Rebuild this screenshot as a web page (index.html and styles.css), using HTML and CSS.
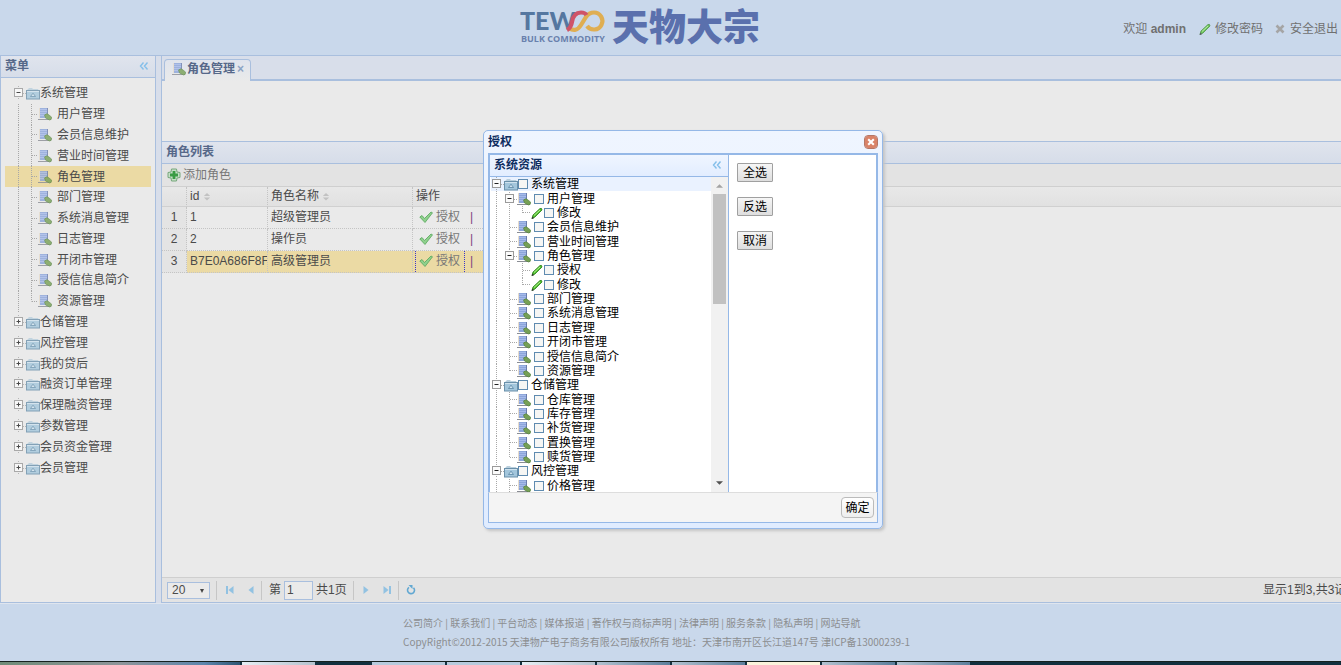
FILE: index.html
```html
<!DOCTYPE html>
<html lang="zh-CN">
<head>
<meta charset="utf-8">
<title>角色管理</title>
<link rel="stylesheet" href="styles.css">
</head>
<body>
<svg class="defs" aria-hidden="true">
  <symbol id="minus" viewBox="0 0 13 14"><path d="M5.500 0v2M5.500 12v2M10 7.500h3" stroke="#aaa" stroke-dasharray="1 1"/><rect x="1.500" y="2.500" width="8" height="8" fill="#fbfbfb" stroke="#9a9a9a"/><path d="M3.500 6.500h4" stroke="#222"/></symbol>
  <symbol id="plus" viewBox="0 0 13 14"><path d="M5.500 0v2M5.500 12v2M10 7.500h3" stroke="#aaa" stroke-dasharray="1 1"/><rect x="1.500" y="2.500" width="8" height="8" fill="#fbfbfb" stroke="#9a9a9a"/><path d="M3.500 6.500h4M5.500 4.500v4" stroke="#222"/></symbol>
  <symbol id="folder" viewBox="0 0 14 14"><path d="M1 4l2-2h3l1 1h5l1 2z" fill="#b9cfdd"/><rect x=".5" y="4.500" width="13" height="8.500" fill="#a3c6dc" stroke="#6a90aa"/><path d="M1 5.500h12" stroke="#cfe2ee"/><path d="M4.500 10.500L7 7.200l2.500 3.300z" fill="#cfe3f0" stroke="#5a87a5" stroke-width=".8"/></symbol>
  <symbol id="page" viewBox="0 0 14 14"><path d="M1.500 1h8.500v10h-8.500z" fill="#8ca5da"/><path d="M2 2.500h7.500M2 4.500h7.500M2 6.500h7.500M2 8.500h7.500" stroke="#a6baea"/><path d="M1.500 1v10" stroke="#e6dccb"/><path d="M9.500 1v6" stroke="#6a7cab"/><path d="M0 12.500h13" stroke="#8a8d94"/><path d="M6.500 8q2.500-2.500 4.500 0l2.500 2q.5 3-2 3l-4-2z" fill="#76a056" stroke="#4c7a38" stroke-width=".6"/></symbol>
  <symbol id="pencil" viewBox="0 0 14 14"><path d="M2 12.500l1-3.500 7-6.500q2-.8 2 1.500l-7 7z" fill="#50c02e" stroke="#287d17" stroke-width=".8"/><path d="M4 9.500l6-5.500" stroke="#b6ee93"/><path d="M1.500 13l1-2.500 1.500 1.700z" fill="#333"/></symbol>
  <symbol id="add" viewBox="0 0 14 14"><path d="M4.500 1h5L10 4l3 .5v5L10 10l-.5 3h-5L4 10l-3-.5v-5L4 4z" fill="#c6dfc8" stroke="#76a77b"/><path d="M7 3v8M3 7h8" stroke="#3a9c45" stroke-width="2.800"/></symbol>
  <symbol id="check" viewBox="0 0 14 14"><path d="M.8 7l2.200-1.500 2.500 3L12 2l1.500.8L6 12.500z" fill="#8fd08d" stroke="#55a65a" stroke-width=".8"/></symbol>
  <symbol id="fold" viewBox="0 0 10 10"><path d="M4.500 1.500L1.500 5l3 3.500M8.500 1.500L5.500 5l3 3.500" fill="none" stroke="#84bfea" stroke-width="1.400"/></symbol>
  <symbol id="sort" viewBox="0 0 8 10"><path d="M4 1l3.500 3.500h-7zM4 9.500L.5 6h7z" fill="#c2c2c2"/></symbol>
  <symbol id="cross" viewBox="0 0 10 10"><path d="M1.500 1.500l7 7M8.500 1.500l-7 7" stroke="currentColor" stroke-width="2.600"/></symbol>
  <symbol id="prev" viewBox="0 0 10 10"><path d="M7.500 1v8L2.500 5z" fill="#92c2e2"/></symbol>
  <symbol id="next" viewBox="0 0 10 10"><path d="M2.500 1v8l5-4z" fill="#92c2e2"/></symbol>
  <symbol id="first" viewBox="0 0 10 10"><path d="M1 1h2v8H1zM8.500 1v8L3.500 5z" fill="#92c2e2"/></symbol>
  <symbol id="last" viewBox="0 0 10 10"><path d="M7 1h2v8H7zM1.500 1v8l5-4z" fill="#92c2e2"/></symbol>
  <symbol id="reload" viewBox="0 0 10 10"><path d="M7.500 2.700A3.500 3.500 0 1 1 3 2.300" fill="none" stroke="#62a8d2" stroke-width="1.600"/><path d="M2.500 0h4v4z" fill="#62a8d2"/></symbol>
</svg>

<header class="top">
  <svg class="logo" viewBox="0 0 244 40" role="img" aria-label="TEWOO 天物大宗">
    <text class="logo-en" x="1" y="22">TEW</text>
    <path d="M50 20q7 5 12-3l5-8q3-4.500 8-4.500a8.500 8.500 0 1 1-7 13.500" fill="none" stroke="#dfae52" stroke-width="4.200"/>
    <path d="M48 22q4-2 5-8 1.500-9.500 9-9.500 4 0 5.500 2.500" fill="none" stroke="#cf5468" stroke-width="4.200"/>
    <text class="logo-sub" x="2" y="34">BULK COMMODITY</text>
    <text class="logo-cn" x="93" y="33">天物大宗</text>
  </svg>
  <nav class="user">
    <span>欢迎 <b>admin</b></span>
    <a href="#"><svg class="i14"><use href="#pencil"/></svg>修改密码</a>
    <a href="#"><svg class="i10"><use href="#cross"/></svg>安全退出</a>
  </nav>
</header>

<div class="work">
  <aside class="side">
    <h2 class="bar">菜单<button class="fold" aria-label="折叠"><svg class="i10"><use href="#fold"/></svg></button></h2>
    <ul class="tree menu">
      <li><svg class="tg"><use href="#minus"/></svg><svg class="i14"><use href="#folder"/></svg>系统管理</li>
      <li class="leaf"><i class="v"></i><i class="t"></i><svg class="i14"><use href="#page"/></svg><a href="#">用户管理</a></li>
      <li class="leaf"><i class="v"></i><i class="t"></i><svg class="i14"><use href="#page"/></svg><a href="#">会员信息维护</a></li>
      <li class="leaf"><i class="v"></i><i class="t"></i><svg class="i14"><use href="#page"/></svg><a href="#">营业时间管理</a></li>
      <li class="leaf on"><i class="v"></i><i class="t"></i><svg class="i14"><use href="#page"/></svg><a href="#">角色管理</a></li>
      <li class="leaf"><i class="v"></i><i class="t"></i><svg class="i14"><use href="#page"/></svg><a href="#">部门管理</a></li>
      <li class="leaf"><i class="v"></i><i class="t"></i><svg class="i14"><use href="#page"/></svg><a href="#">系统消息管理</a></li>
      <li class="leaf"><i class="v"></i><i class="t"></i><svg class="i14"><use href="#page"/></svg><a href="#">日志管理</a></li>
      <li class="leaf"><i class="v"></i><i class="t"></i><svg class="i14"><use href="#page"/></svg><a href="#">开闭市管理</a></li>
      <li class="leaf"><i class="v"></i><i class="t"></i><svg class="i14"><use href="#page"/></svg><a href="#">授信信息简介</a></li>
      <li class="leaf"><i class="v"></i><i class="t end"></i><svg class="i14"><use href="#page"/></svg><a href="#">资源管理</a></li>
      <li><svg class="tg"><use href="#plus"/></svg><svg class="i14"><use href="#folder"/></svg>仓储管理</li>
      <li><svg class="tg"><use href="#plus"/></svg><svg class="i14"><use href="#folder"/></svg>风控管理</li>
      <li><svg class="tg"><use href="#plus"/></svg><svg class="i14"><use href="#folder"/></svg>我的贷后</li>
      <li><svg class="tg"><use href="#plus"/></svg><svg class="i14"><use href="#folder"/></svg>融资订单管理</li>
      <li><svg class="tg"><use href="#plus"/></svg><svg class="i14"><use href="#folder"/></svg>保理融资管理</li>
      <li><svg class="tg"><use href="#plus"/></svg><svg class="i14"><use href="#folder"/></svg>参数管理</li>
      <li><svg class="tg"><use href="#plus"/></svg><svg class="i14"><use href="#folder"/></svg>会员资金管理</li>
      <li><svg class="tg"><use href="#plus"/></svg><svg class="i14"><use href="#folder"/></svg>会员管理</li>
    </ul>
  </aside>

  <main class="main">
    <div class="tabs"><div class="tab"><svg class="i14"><use href="#page"/></svg>角色管理<button class="tab-x" aria-label="关闭">×</button></div></div>
    <div class="search"></div>
    <h2 class="bar">角色列表</h2>
    <div class="tools"><a href="#"><svg class="i14"><use href="#add"/></svg>添加角色</a></div>
    <div class="grid">
      <table>
        <colgroup><col class="c-no"><col class="c-id"><col class="c-name"><col class="c-op"><col></colgroup>
        <thead><tr><th></th><th>id <svg class="sort"><use href="#sort"/></svg></th><th>角色名称 <svg class="sort"><use href="#sort"/></svg></th><th>操作</th><th></th></tr></thead>
        <tbody>
          <tr><td>1</td><td>1</td><td>超级管理员</td><td><a class="act" href="#"><svg class="i14"><use href="#check"/></svg>授权</a><span class="sep">|</span></td></tr>
          <tr><td>2</td><td>2</td><td>操作员</td><td><a class="act" href="#"><svg class="i14"><use href="#check"/></svg>授权</a><span class="sep">|</span></td></tr>
          <tr class="sel"><td>3</td><td>B7E0A686F8F</td><td>高级管理员</td><td><a class="act focus" href="#"><svg class="i14"><use href="#check"/></svg>授权</a><span class="sep">|</span></td></tr>
        </tbody>
      </table>
    </div>
    <div class="pager">
      <span class="size"><select aria-label="每页条数"><option>20</option></select></span>
      <span class="rule"></span>
      <button aria-label="首页"><svg class="i10"><use href="#first"/></svg></button>
      <button aria-label="上一页"><svg class="i10"><use href="#prev"/></svg></button>
      <span class="rule"></span>
      <label class="pg">第<input type="text" value="1">共1页</label>
      <span class="rule"></span>
      <button aria-label="下一页"><svg class="i10"><use href="#next"/></svg></button>
      <button aria-label="末页"><svg class="i10"><use href="#last"/></svg></button>
      <span class="rule"></span>
      <button aria-label="刷新"><svg class="i10"><use href="#reload"/></svg></button>
      <span class="info">显示1到3,共3记录</span>
    </div>
  </main>
</div>

<footer class="foot">
  <p>公司简介 | 联系我们 | 平台动态 | 媒体报道 | 著作权与商标声明 | 法律声明 | 服务条款 | 隐私声明 | 网站导航</p>
  <p>CopyRight©2012-2015 天津物产电子商务有限公司版权所有 地址：天津市南开区长江道147号 津ICP备13000239-1</p>
</footer>
<div class="task"><i class="start"></i><i class="item lit"></i><i class="gap"></i><i class="item pale"></i><i class="item pale"></i><i class="item lit"></i><i class="item blue"></i><i class="item blue"></i><i class="item live"></i><i class="item blue"></i><i class="item blue"></i></div>

<section class="dialog" role="dialog" aria-label="授权">
  <h2 class="dlg-title">授权<button class="close" aria-label="关闭"><svg class="i10"><use href="#cross"/></svg></button></h2>
  <div class="dlg-body">
    <div class="res">
      <h3 class="bar">系统资源<button class="fold" aria-label="折叠"><svg class="i10"><use href="#fold"/></svg></button></h3>
      <div class="scroller">
        <ul class="tree pick">
          <li class="hot"><svg class="tg"><use href="#minus"/></svg><svg class="i14"><use href="#folder"/></svg><label><input type="checkbox">系统管理</label></li>
          <li class="l2"><i class="v"></i><svg class="tg"><use href="#minus"/></svg><svg class="i14"><use href="#page"/></svg><label><input type="checkbox">用户管理</label></li>
          <li class="l3"><i class="v"></i><i class="v"></i><i class="t end"></i><svg class="i14"><use href="#pencil"/></svg><label><input type="checkbox">修改</label></li>
          <li class="l2"><i class="v"></i><i class="t"></i><svg class="i14"><use href="#page"/></svg><label><input type="checkbox">会员信息维护</label></li>
          <li class="l2"><i class="v"></i><i class="t"></i><svg class="i14"><use href="#page"/></svg><label><input type="checkbox">营业时间管理</label></li>
          <li class="l2"><i class="v"></i><svg class="tg"><use href="#minus"/></svg><svg class="i14"><use href="#page"/></svg><label><input type="checkbox">角色管理</label></li>
          <li class="l3"><i class="v"></i><i class="v"></i><i class="t"></i><svg class="i14"><use href="#pencil"/></svg><label><input type="checkbox">授权</label></li>
          <li class="l3"><i class="v"></i><i class="v"></i><i class="t end"></i><svg class="i14"><use href="#pencil"/></svg><label><input type="checkbox">修改</label></li>
          <li class="l2"><i class="v"></i><i class="t"></i><svg class="i14"><use href="#page"/></svg><label><input type="checkbox">部门管理</label></li>
          <li class="l2"><i class="v"></i><i class="t"></i><svg class="i14"><use href="#page"/></svg><label><input type="checkbox">系统消息管理</label></li>
          <li class="l2"><i class="v"></i><i class="t"></i><svg class="i14"><use href="#page"/></svg><label><input type="checkbox">日志管理</label></li>
          <li class="l2"><i class="v"></i><i class="t"></i><svg class="i14"><use href="#page"/></svg><label><input type="checkbox">开闭市管理</label></li>
          <li class="l2"><i class="v"></i><i class="t"></i><svg class="i14"><use href="#page"/></svg><label><input type="checkbox">授信信息简介</label></li>
          <li class="l2"><i class="v"></i><i class="t end"></i><svg class="i14"><use href="#page"/></svg><label><input type="checkbox">资源管理</label></li>
          <li><svg class="tg"><use href="#minus"/></svg><svg class="i14"><use href="#folder"/></svg><label><input type="checkbox">仓储管理</label></li>
          <li class="l2"><i class="v"></i><i class="t"></i><svg class="i14"><use href="#page"/></svg><label><input type="checkbox">仓库管理</label></li>
          <li class="l2"><i class="v"></i><i class="t"></i><svg class="i14"><use href="#page"/></svg><label><input type="checkbox">库存管理</label></li>
          <li class="l2"><i class="v"></i><i class="t"></i><svg class="i14"><use href="#page"/></svg><label><input type="checkbox">补货管理</label></li>
          <li class="l2"><i class="v"></i><i class="t"></i><svg class="i14"><use href="#page"/></svg><label><input type="checkbox">置换管理</label></li>
          <li class="l2"><i class="v"></i><i class="t end"></i><svg class="i14"><use href="#page"/></svg><label><input type="checkbox">赎货管理</label></li>
          <li><svg class="tg"><use href="#minus"/></svg><svg class="i14"><use href="#folder"/></svg><label><input type="checkbox">风控管理</label></li>
          <li class="l2"><i class="v"></i><i class="t"></i><svg class="i14"><use href="#page"/></svg><label><input type="checkbox">价格管理</label></li>
        </ul>
        <div class="track"><svg class="arrow" viewBox="0 0 8 4"><path d="M0 4l4-4 4 4z" fill="#a3a3a3"/></svg><div class="thumb"></div><svg class="arrow" viewBox="0 0 8 4"><path d="M0 0l4 4 4-4z" fill="#505050"/></svg></div>
      </div>
    </div>
    <div class="side-btns"><button>全选</button><button>反选</button><button>取消</button></div>
  </div>
  <div class="dlg-foot"><button class="ok">确定</button></div>
</section>
</body>
</html>
```
FILE: styles.css
```css
* { box-sizing: border-box; }
html, body { height: 100%; }
body {
  margin: 0;
  display: flex;
  flex-direction: column;
  overflow: hidden;
  background: #c9d8eb;
  color: #4a4a4a;
  font: 12px/16px "Liberation Sans", "Noto Sans CJK SC", sans-serif;
}
a { color: inherit; text-decoration: none; }
button { font: inherit; color: inherit; padding: 0; border: 0; background: none; }
ul { list-style: none; margin: 0; padding: 0; }
h2, h3, p { margin: 0; font-size: 12px; }
.defs { position: absolute; width: 0; height: 0; }
.i14 { width: 14px; height: 14px; flex: none; }
.i10 { width: 10px; height: 10px; flex: none; display: block; }

/* header */
.top {
  flex: none;
  height: 56px;
  display: flex;
  align-items: center;
  justify-content: space-between;
  padding: 0 3px 0 519px;
  border-bottom: 1px solid #a9bfde;
}
.logo { width: 244px; height: 40px; overflow: visible; }
.logo-en { font: 900 25px Lato, sans-serif; fill: #5577a0; }
.logo-sub { font: bold 9px "Open Sans", sans-serif; fill: #6981ad; }
.logo-cn { font: 900 37px "Noto Sans CJK SC", sans-serif; fill: #5a70ad; }
.user { display: flex; gap: 12px; padding-top: 2px; color: #707070; }
.user a { display: flex; align-items: center; gap: 3px; }
.user .i10 { color: #a5a5a5; margin-right: 2px; }
.user .i14 { opacity: .75; }

/* work area */
.work { flex: 1; min-height: 0; display: flex; gap: 5px; background: #d8deea; }
.side { flex: none; width: 156px; background: #eaeaea; border: 1px solid #a9bfde; border-top: 0; }
.main { flex: 1; min-width: 0; display: flex; flex-direction: column; background: #eaeaea; border: solid #a9bfde; border-width: 0 0 1px 1px; }
.bar {
  flex: none;
  height: 22px;
  display: flex;
  align-items: center;
  justify-content: space-between;
  padding: 0 6px 1px 4px;
  background: linear-gradient(#e0e4ed, #d6dde9);
  border-bottom: 1px solid #a9bfde;
  color: #566889;
}

/* trees */
.tree { display: grid; grid-auto-rows: 1fr; }
.tree li { display: flex; align-items: center; min-height: 0; white-space: nowrap; }
.tg { width: 13px; height: 14px; flex: none; }
.v, .t { width: 13px; align-self: stretch; flex: none; background: repeating-linear-gradient(#a8a8a8 0 1px, transparent 1px 2px) 5px 0 / 1px 100% no-repeat; }
.t { background:
  repeating-linear-gradient(#a8a8a8 0 1px, transparent 1px 2px) 5px 0 / 1px 100% no-repeat,
  repeating-linear-gradient(90deg, #a8a8a8 0 1px, transparent 1px 2px) 6px 50% / 7px 1px no-repeat; }
.t.end { background-size: 1px 50%, 7px 1px; }
.menu { height: 395px; margin: 5px 4px; }
.menu li { padding-left: 8px; }
.menu svg { opacity: .8; }
.menu .t { width: 12px; }
.menu .leaf a { margin-left: 5px; }
.menu .on { background: #ebdaa4; }

/* tabs and grid */
.tabs { flex: none; height: 25px; padding: 3px 2px 0; background: #d8deea; border-bottom: 2px solid #a9bfde; }
.tab {
  width: 87px;
  height: 22px;
  display: flex;
  align-items: center;
  padding: 0 4px 3px 7px;
  background: linear-gradient(#dfe4ed, #eaeaea);
  border: 1px solid #a9bfde;
  border-bottom: 0;
  border-radius: 4px 4px 0 0;
  color: #566889;
  font-weight: bold;
}
.tab .i14 { margin-right: 1px; opacity: .8; }
.tab-x { margin-left: 2px; color: #8ba3c4; }
.search { flex: none; height: 61px; border-bottom: 1px solid #a9bfde; }
.tools { flex: none; height: 23px; display: flex; align-items: center; padding: 0 5px; background: #e3e3e3; border-bottom: 1px solid #cfcfcf; color: #777; }
.tools a { display: flex; align-items: center; gap: 2px; }
.grid { flex: 1; min-height: 0; overflow: hidden; }
table { width: 100%; table-layout: fixed; border-collapse: separate; border-spacing: 0; }
.c-no { width: 25px; }
.c-id { width: 81px; }
.c-name { width: 145px; }
.c-op { width: 300px; }
th, td { height: 22px; padding: 0 3px 2px; overflow: hidden; white-space: nowrap; text-align: left; font-weight: normal; border: dotted #c4c4c4; border-width: 0 1px 1px 0; line-height: 16px; }
th { height: 20px; background: linear-gradient(#e8e8e8, #e1e1e1); border-bottom-style: solid; border-bottom-color: #d0d0d0; }
th:last-child { border-right: 0; }
td:first-child { text-align: center; background: #e4e4e4; }
.sort { width: 8px; height: 9px; vertical-align: -1px; }
.sel td:not(:first-child) { background: #ebdaa4; }
td:nth-child(4) { padding: 0 2px; }
.act { display: inline-flex; align-items: center; gap: 3px; height: 21px; padding: 0 4px 2px 3px; border: 1px dotted transparent; border-width: 0 1px; vertical-align: top; color: #777; }
.act.focus { border-color: #3a35c8; }
.sep { margin-left: 5px; line-height: 20px; color: #7c4080; }

/* pager */
.pager { flex: none; height: 25px; display: flex; align-items: center; padding-left: 5px; background: #e3e3e3; border-top: 1px solid #cfcfcf; overflow: hidden; }
.pager button { width: 21px; height: 20px; display: grid; place-items: center; }
.size { position: relative; width: 43px; height: 17px; margin-right: 6px; }
.size::after { content: ""; position: absolute; right: 6px; top: 7px; border: solid transparent; border-width: 4px 2px 0; border-top-color: #444; }
select, .pager input { appearance: none; font: inherit; color: inherit; background: #eaeaea; border: 1px solid #a9bfde; border-radius: 0; outline: 0; }
select { width: 43px; height: 17px; padding: 0 4px; line-height: 15px; display: block; }
.pager input { width: 29px; height: 19px; padding: 0 2px; margin: 0 3px; }
.rule { width: 1px; height: 19px; background: #c6c6c6; margin-right: 2px; }
.pg { display: flex; align-items: center; margin: 0 6px 0 5px; white-space: nowrap; }
.info { flex: none; width: 78px; margin-left: auto; overflow: hidden; white-space: nowrap; }

/* footer */
.foot { flex: none; height: 58px; padding: 9px 0 0 403px; color: #8c8e90; white-space: nowrap; border-top: 1px solid #dfe5ee; }
.foot p { font: 10px/19px "Noto Sans CJK SC", sans-serif; }
.task { flex: none; height: 4px; display: flex; gap: 2px; background: #12303f; border-top: 1px solid #16211f; }
.start { width: 240px; background: linear-gradient(90deg, #6f8c78, #8d959a 50%, #5d86ad 85%, #2d5674); }
.item { width: 73px; }
.gap { width: 53px; }
.lit { background: linear-gradient(90deg, #e6eef4, #b4c2ce); }
.pale { background: #b7cbdd; }
.blue { background: linear-gradient(90deg, #b2c2d0, #5c7f9c); }
.live { background: #fbf3dc; }

/* dialog */
.dialog {
  position: absolute;
  left: 483px;
  top: 130px;
  width: 400px;
  padding: 0 4px 5px;
  background: linear-gradient(#eff5ff, #e0ecff);
  border: 1px solid #95b8e7;
  border-radius: 5px;
  box-shadow: 2px 2px 3px #c4c4c4;
  color: #000;
}
.dlg-title { height: 22px; display: flex; align-items: center; justify-content: space-between; padding: 0 1px 1px 0; color: #0e2d5f; }
.close { width: 12px; height: 12px; display: grid; place-items: center; color: #fff; background: #d98368; border-radius: 3px; outline: 1px solid #b57766; }
.close .i10 { width: 8px; height: 8px; }
.dlg-body { height: 339px; display: flex; background: #fff; border: solid #95b8e7; border-width: 2px 2px 0; overflow: hidden; }
.dialog .bar { padding-left: 4px; background: linear-gradient(#eff5ff, #e2edff); border-color: #95b8e7; color: #0e2d5f; }
.res { flex: none; width: 239px; display: flex; flex-direction: column; border: solid #95b8e7; border-width: 0 1px 0 0; }
.scroller { flex: 1; min-height: 0; display: flex; align-items: flex-start; overflow: hidden; }
.pick { flex: 1; height: 316px; padding-left: 1px; }
.pick .hot { background: #eaf2ff; }
.pick li { height: 100%; line-height: 14px; }
.pick label { display: flex; align-items: center; gap: 3px; margin-left: 0; }
.pick .l2 label { margin-left: 3px; }
.pick input { appearance: none; width: 10px; height: 10px; margin: 0; background: #f6f6f4; border: 1px solid #5f8bb0; }
.track { flex: none; width: 17px; height: 100%; display: flex; flex-direction: column; align-items: center; padding: 7px 0; background: #f1f1f1; }
.arrow { width: 7px; height: 4px; flex: none; }
.thumb { width: 13px; height: 110px; margin: 6px 0 auto; background: #c1c1c1; }
.side-btns { display: flex; flex-direction: column; gap: 15px; padding: 8px; }
.side-btns button { width: 36px; height: 19px; padding-top: 2px; line-height: 15px; background: linear-gradient(#f6f6f6, #dedede); border: 1px solid #a0a0a0; border-radius: 1px; }
.dlg-foot { height: 31px; display: flex; justify-content: flex-end; padding: 4px 3px; background: #f4f4f4; border: 1px solid #95b8e7; border-top-color: #ddd; }
.ok { width: 33px; height: 21px; background: linear-gradient(#fff, #eee); border: 1px solid #bbb; border-radius: 4px; }
```
